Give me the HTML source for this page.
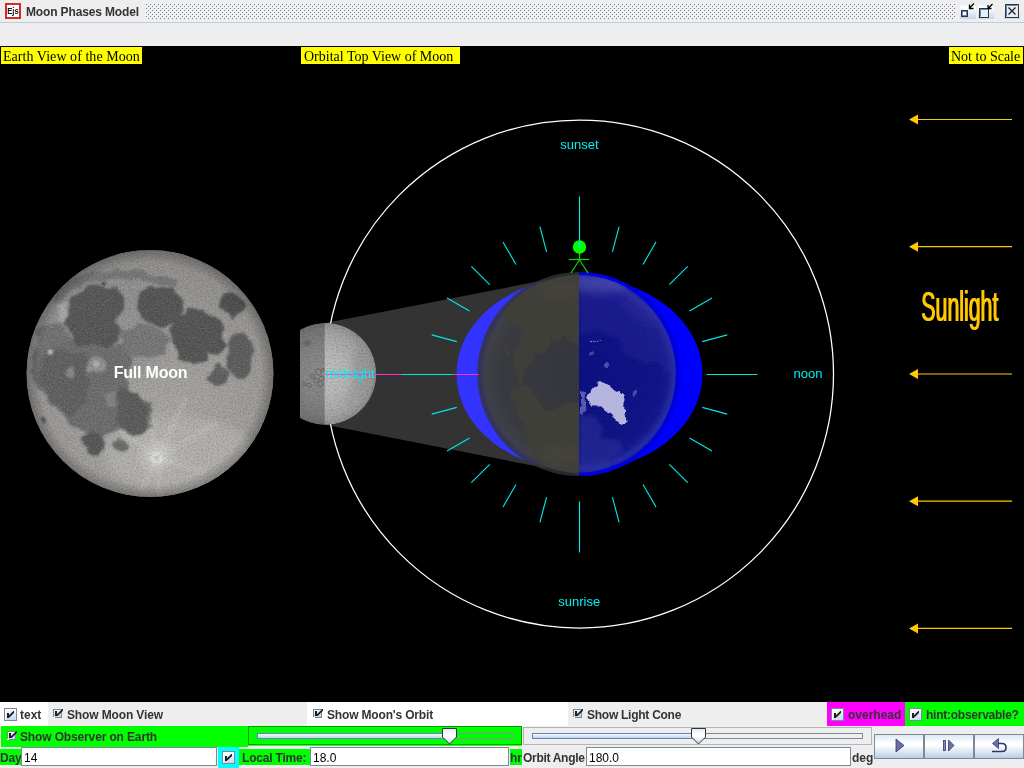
<!DOCTYPE html>
<html><head><meta charset="utf-8"><title>Moon Phases Model</title>
<style>
html,body{margin:0;padding:0;}
body{width:1024px;height:768px;overflow:hidden;background:#eeeeee;position:relative;font-family:"Liberation Sans",sans-serif;font-size:12px;color:#333333;}
.abs{position:absolute;}
.lbl,.tf,.ylab,#title{will-change:transform;}
#titlebar{left:0;top:0;width:1024px;height:22px;background:#eeeeee;border-bottom:1px solid #b8cfe5;}
#title{left:26px;top:5px;font-weight:bold;font-size:12px;line-height:14px;color:#333;white-space:nowrap;letter-spacing:-0.14px;}
#canvas{left:0;top:46px;width:1024px;height:656px;background:#000;}
.ylab{background:#ffff00;color:#000;font-family:"Liberation Serif",serif;font-size:14px;line-height:19px;height:17px;top:47px;white-space:nowrap;overflow:hidden;}
.lbl{font-weight:bold;font-size:12px;line-height:14px;white-space:nowrap;color:#333;}
.tf{background:#fff;border:1px solid #7a8a99;box-sizing:border-box;font-size:12px;line-height:17px;color:#000;padding-left:2px;padding-top:2px;overflow:hidden;}
.cb{width:13px;height:13px;box-sizing:border-box;border:1px solid #7a8a99;background:linear-gradient(170deg,#ffffff 0%,#f4f8fc 25%,#c4d8ee 100%);box-shadow:inset 1px 1px 0 #ffffff;}
.btn{top:734px;width:50px;height:25px;box-sizing:border-box;border:1px solid #7a8a99;background:linear-gradient(#dde8f3 0%,#ffffff 35%,#ffffff 45%,#b8cfe5 100%);}
</style></head><body>
<div id="titlebar" class="abs"></div>
<div id="title" class="abs">Moon Phases Model</div>
<div id="canvas" class="abs"></div>
<div class="abs ylab" style="left:1px;width:141px;"><span style="margin-left:2px;letter-spacing:0.05px">Earth View of the Moon</span></div>
<div class="abs ylab" style="left:301px;width:159px;"><span style="margin-left:3px">Orbital Top View of Moon</span></div>
<div class="abs ylab" style="left:949px;width:74px;"><span style="margin-left:2px">Not to Scale</span></div>

<!-- bottom row 1 -->
<div class="abs" style="left:0;top:702px;width:48px;height:24px;background:#fff"></div>
<div class="abs" style="left:307px;top:702px;width:261px;height:24px;background:#fff"></div>
<div class="abs" style="left:827px;top:702px;width:78px;height:24px;background:#ff00ff"></div>
<div class="abs" style="left:905px;top:702px;width:119px;height:24px;background:#00ff00"></div>
<div class="abs cb" style="left:4px;top:708px"></div>
<div class="abs lbl" style="left:20px;top:708px">text</div>
<div class="abs lbl" style="left:67px;top:708px;letter-spacing:-0.13px">Show Moon View</div>
<div class="abs lbl" style="left:327px;top:708px;letter-spacing:-0.17px">Show Moon's Orbit</div>
<div class="abs lbl" style="left:587px;top:708px;letter-spacing:-0.26px">Show Light Cone</div>
<div class="abs cb" style="left:831px;top:708px"></div>
<div class="abs lbl" style="left:848px;top:708px">overhead</div>
<div class="abs cb" style="left:909px;top:708px"></div>
<div class="abs lbl" style="left:926px;top:708px;letter-spacing:-0.25px">hint:observable?</div>

<!-- bottom row 2 -->
<div class="abs" style="left:1px;top:726px;width:247px;height:21px;background:#00ff00"></div>
<div class="abs" style="left:248px;top:726px;width:274px;height:19px;background:#00ff00;box-sizing:border-box;border:1px solid #00a000;"></div>
<div id="gstrip" class="abs" style="left:248px;top:745px;width:274px;height:1px;background:#30ff30"></div>
<div class="abs lbl" style="left:20px;top:730px;letter-spacing:-0.14px">Show Observer on Earth</div>
<div class="abs" style="left:523px;top:727px;width:349px;height:18px;background:#eeeeee;box-sizing:border-box;border:1px solid #b4b4b4;"></div>

<!-- bottom row 3 -->
<div class="abs" style="left:0px;top:749px;width:21px;height:16px;background:#00ff00"></div>
<div class="abs lbl" style="left:0px;top:751px;letter-spacing:-0.2px">Day</div>
<div class="abs tf" style="left:21px;top:747px;width:196px;height:19px;">14</div>
<div class="abs" style="left:218px;top:747px;width:21px;height:21px;background:#00ffff"></div>
<div class="abs cb" style="left:222px;top:751px"></div>
<div class="abs" style="left:239px;top:749px;width:71px;height:16px;background:#00ff00"></div>
<div class="abs lbl" style="left:242px;top:751px;letter-spacing:-0.2px">Local Time:</div>
<div class="abs tf" style="left:310px;top:747px;width:199px;height:19px;">18.0</div>
<div class="abs" style="left:510px;top:749px;width:12px;height:16px;background:#00ff00"></div>
<div class="abs lbl" style="left:510px;top:751px;">hr</div>
<div class="abs lbl" style="left:523px;top:751px;letter-spacing:-0.3px">Orbit Angle</div>
<div class="abs tf" style="left:586px;top:747px;width:265px;height:19px;">180.0</div>
<div class="abs lbl" style="left:852px;top:751px;">deg</div>
<div class="abs btn" style="left:874px"></div>
<div class="abs btn" style="left:924px"></div>
<div class="abs btn" style="left:974px"></div>

<svg class="abs" id="ui" style="left:0;top:0;will-change:transform" width="1024" height="768" viewBox="0 0 1024 768">
<!--UI-->
<defs>
<pattern id="bumps" x="145" y="3" width="4" height="4" patternUnits="userSpaceOnUse">
<rect x="0" y="0" width="1" height="1" fill="#ffffff"/><rect x="1" y="1" width="1" height="1" fill="#6b7f95"/>
<rect x="2" y="2" width="1" height="1" fill="#ffffff"/><rect x="3" y="3" width="1" height="1" fill="#6b7f95"/>
</pattern>
<linearGradient id="gbtn" x1="0" y1="0" x2="0" y2="1"><stop offset="0" stop-color="#e4edf6"/><stop offset="0.3" stop-color="#ffffff"/><stop offset="1" stop-color="#c3d6ea"/></linearGradient>
<linearGradient id="gthumb" x1="0" y1="0" x2="0" y2="1"><stop offset="0" stop-color="#dbe6f2"/><stop offset="0.35" stop-color="#ffffff"/><stop offset="0.55" stop-color="#ffffff"/><stop offset="1" stop-color="#bcd0e6"/></linearGradient>
<linearGradient id="gtrack" x1="0" y1="0" x2="0" y2="1"><stop offset="0" stop-color="#ffffff"/><stop offset="1" stop-color="#b8cfe5"/></linearGradient>
<linearGradient id="gcb" x1="0" y1="0" x2="0.3" y2="1"><stop offset="0" stop-color="#f4f8fc"/><stop offset="1" stop-color="#c4d6ea"/></linearGradient>
<g id="chk"><rect x="3" y="5" width="2" height="5" fill="#1e1e1e"/><path d="M5 7.3 L9.3 3 H10 V5 L5.7 9.3 H5 Z" fill="#1e1e1e"/></g>
<g id="scb"><rect x="0" y="0" width="9" height="9" fill="#7a8a99"/><rect x="1" y="1" width="7" height="7" fill="url(#gcb)"/><rect x="0" y="8" width="2" height="1" fill="#ffffff"/><rect x="2" y="2" width="2" height="5" fill="#1e1e1e"/><path d="M4 5.3 L9.3 0 H10 V1.7 L4.7 7 H4 Z" fill="#1e1e1e"/></g>
</defs>
<!-- title bar bumps -->
<rect x="145" y="3" width="811" height="16" fill="url(#bumps)"/>
<!-- Ejs icon -->
<rect x="5" y="3" width="16" height="16" fill="#d32a2a"/>
<rect x="7" y="5" width="12" height="12" fill="#ffffff"/>
<text x="7.2" y="14" font-family="Liberation Sans, sans-serif" font-weight="bold" font-size="8.5" fill="#111" textLength="11.6" lengthAdjust="spacingAndGlyphs">Ejs</text>
<!-- window buttons -->
<rect x="960" y="3" width="16" height="16" fill="url(#gbtn)"/>
<rect x="961.5" y="10.5" width="6" height="6" fill="#ffffff" stroke="#333333"/>
<rect x="962.5" y="11.5" width="4" height="4" fill="none" stroke="#6382bf"/>
<path d="M974 3.5 L969.5 8 M969.5 4.5 V8.5 H973.5" fill="none" stroke="#000" stroke-width="1.3"/>
<rect x="978" y="3" width="16" height="16" fill="url(#gbtn)"/>
<rect x="979.5" y="8.5" width="9" height="9" fill="#e6eef7" stroke="#333333"/>
<path d="M980.5 16.5 V9.5 H987.5" fill="none" stroke="#6382bf"/>
<path d="M992.5 4 L988 8.5 M988 5 V8.5 H991.5" fill="none" stroke="#000" stroke-width="1.3"/>
<rect x="1004" y="3" width="16" height="16" fill="url(#gbtn)"/>
<rect x="1005.5" y="4.5" width="13" height="13" fill="#e6eef7" stroke="#333333"/>
<path d="M1006.5 16.5 V5.5 H1017.5" fill="none" stroke="#6382bf"/>
<path d="M1008.5 7.5 L1015.5 14.5 M1015.5 7.5 L1008.5 14.5" fill="none" stroke="#222" stroke-width="1.3"/>
<!-- check marks -->
<use href="#chk" x="4" y="708"/><use href="#chk" x="831" y="708"/><use href="#chk" x="909" y="708"/><use href="#chk" x="222" y="751"/>
<use href="#scb" x="53" y="709"/><use href="#scb" x="313" y="709"/><use href="#scb" x="573" y="709"/><use href="#scb" x="7" y="731"/>
<!-- slider 1 (green) -->
<rect x="257.5" y="733.5" width="255" height="5" fill="none" stroke="#8f8aa8"/>
<rect x="257.5" y="733.5" width="192" height="5" fill="url(#gtrack)" stroke="#6382bf"/>
<path d="M442.5 728.5 H456.5 V737 L449.5 744 L442.5 737 Z" fill="url(#gthumb)" stroke="#333333"/>
<!-- slider 2 -->
<rect x="532.5" y="733.5" width="330" height="5" fill="#eeeeee" stroke="#7a8a99"/>
<rect x="532.5" y="733.5" width="166" height="5" fill="url(#gtrack)" stroke="#6382bf"/>
<path d="M691.5 728.5 H705.5 V737 L698.5 744 L691.5 737 Z" fill="url(#gthumb)" stroke="#333333"/>
<!-- button icons -->
<path d="M896 739 L904 745.5 L896 752 Z" fill="#6e6ea8" stroke="#33336a" stroke-width="0.8"/>
<rect x="943.5" y="740.5" width="2" height="10" fill="#8a8ac0" stroke="#33336a" stroke-width="0.8"/>
<path d="M948.5 740 L954 745.5 L948.5 751 Z" fill="#6e6ea8" stroke="#33336a" stroke-width="0.8"/>
<path d="M992 751.5 H1002 Q1006 751.5 1006 747.5 Q1006 743.5 1002 743.5 H998" fill="none" stroke="#33336a" stroke-width="1.6"/>
<path d="M992.5 743.5 L998.5 738.5 V748.5 Z" fill="#6e6ea8" stroke="#33336a" stroke-width="0.8"/>
<!--/UI-->
</svg>
<svg class="abs" id="scene" style="left:0;top:0;will-change:transform" width="1024" height="768" viewBox="0 0 1024 768">
<!--SCENE-->
<defs>
<clipPath id="cpMoon"><circle cx="150" cy="373.5" r="123.5"/></clipPath>
<clipPath id="cpEarthL"><path d="M579 275 A97 98.8 0 0 0 579 472.6 Z"/></clipPath>
<clipPath id="cpEarthR"><path d="M579 275 A97 98.8 0 0 1 579 472.6 Z"/></clipPath>
<clipPath id="cpTopMoon"><path d="M300 320 H380 V430 H300 Z"/></clipPath>
<clipPath id="cpTM"><circle cx="325.4" cy="373.9" r="50.8"/></clipPath>
<filter id="fat" x="-5%" y="-20%" width="110%" height="140%"><feOffset dx="1" dy="0" result="o"/><feMerge><feMergeNode in="SourceGraphic"/><feMergeNode in="o"/></feMerge></filter>
<filter id="rough" x="-10%" y="-10%" width="120%" height="120%"><feTurbulence type="fractalNoise" baseFrequency="0.06" numOctaves="3" seed="3" result="t"/><feDisplacementMap in="SourceGraphic" in2="t" scale="12" xChannelSelector="R" yChannelSelector="G" result="d"/><feGaussianBlur in="d" stdDeviation="1.3"/></filter>
<filter id="rough2" x="-10%" y="-10%" width="120%" height="120%"><feTurbulence type="fractalNoise" baseFrequency="0.12" numOctaves="3" seed="5" result="t"/><feDisplacementMap in="SourceGraphic" in2="t" scale="7" xChannelSelector="R" yChannelSelector="G" result="d"/><feGaussianBlur in="d" stdDeviation="0.7"/></filter>
<filter id="blur3" x="-30%" y="-30%" width="160%" height="160%"><feGaussianBlur stdDeviation="3"/></filter>
<filter id="blur2" x="-30%" y="-30%" width="160%" height="160%"><feGaussianBlur stdDeviation="2"/></filter>
<filter id="blur1" x="-30%" y="-30%" width="160%" height="160%"><feGaussianBlur stdDeviation="1"/></filter>
<filter id="blur5" x="-30%" y="-30%" width="160%" height="160%"><feGaussianBlur stdDeviation="5"/></filter>
<filter id="noiseM" x="0" y="0" width="100%" height="100%"><feTurbulence type="fractalNoise" baseFrequency="0.7" numOctaves="2" seed="7" result="n"/><feColorMatrix type="matrix" values="0 0 0 0 1  0 0 0 0 1  0 0 0 0 1  1.6 0 0 0 -0.62"/></filter>
<filter id="noiseD" x="0" y="0" width="100%" height="100%"><feTurbulence type="fractalNoise" baseFrequency="0.6" numOctaves="2" seed="11" result="n"/><feColorMatrix type="matrix" values="0 0 0 0 0  0 0 0 0 0  0 0 0 0 0  1.6 0 0 0 -0.62"/></filter>
<radialGradient id="gMoon" cx="165" cy="430" r="190" gradientUnits="userSpaceOnUse"><stop offset="0" stop-color="#a9a7a3"/><stop offset="0.5" stop-color="#9e9c99"/><stop offset="1" stop-color="#8c8a88"/></radialGradient>
<radialGradient id="gMoonEdge" cx="150" cy="373.5" r="123.5" gradientUnits="userSpaceOnUse"><stop offset="0.9" stop-color="#000" stop-opacity="0"/><stop offset="1" stop-color="#000" stop-opacity="0.25"/></radialGradient>
<radialGradient id="gEarthL" cx="579" cy="373.8" r="98" gradientUnits="userSpaceOnUse"><stop offset="0" stop-color="#36373c"/><stop offset="0.8" stop-color="#3a3b41"/><stop offset="0.95" stop-color="#404148"/><stop offset="1" stop-color="#3c3c52"/></radialGradient>
<radialGradient id="gEarthR" cx="579" cy="373.8" r="98" gradientUnits="userSpaceOnUse"><stop offset="0" stop-color="#0a0e80"/><stop offset="0.8" stop-color="#0e1284"/><stop offset="0.9" stop-color="#12168a"/><stop offset="0.97" stop-color="#242aa2"/><stop offset="1" stop-color="#1a1ea0"/></radialGradient>
<radialGradient id="gTM" cx="322" cy="374.4" r="55" gradientUnits="userSpaceOnUse"><stop offset="0" stop-color="#c2c2c2"/><stop offset="0.45" stop-color="#b6b6b6"/><stop offset="0.8" stop-color="#a2a2a2"/><stop offset="0.95" stop-color="#8c8c8c"/><stop offset="1" stop-color="#7a7a7a"/></radialGradient>
</defs>
<!-- orbit -->
<circle cx="579.5" cy="374" r="254" fill="none" stroke="#ffffff" stroke-width="1.25"/>
<!-- blue tidal ellipse -->
<ellipse cx="579.5" cy="374" rx="123" ry="96.5" fill="#0000ff"/>
<!-- light cone -->
<path d="M325.4 323.1 L579.5 273.3 V474.7 L325.4 424.7 Z" fill="#ffffff" fill-opacity="0.2"/>
<!-- Earth -->
<path d="M579.3 271.9 A102.1 102.1 0 0 0 579.3 476.1 Z" fill="#333333" fill-opacity="0.8"/>
<path d="M579.3 271.9 A102.1 102.1 0 0 1 579.3 476.1 Z" fill="#0000de"/>
<g clip-path="url(#cpEarthL)"><rect x="470" y="270" width="110" height="210" fill="url(#gEarthL)"/>
<!--EARTHL-->
<g filter="url(#rough2)">
<path d="M532.9 284.9 L580 272.7 L580 345.8 L570.8 340.4 L562.7 337.7 L557.2 340.4 L549.1 343.1 L546.4 351.2 L535.6 354 L530.2 364.8 L522 374 L515.3 374 L513.9 356.7 L518 343.1 L522 329.6 L516.6 324.2 L505.8 321.5 L504.4 309.3 L516.6 297.1 Z" fill="#40413a"/>
<path d="M516.6 374 L524.7 374 L522 386.2 L532.9 391.6 L539.6 405.1 L551.8 411.9 L560 406.5 L568.1 403.8 L580 401.1 L580 474.2 L557.2 468.8 L541 462 L530.2 452.5 L527.5 439 L522 422.7 L515.3 406.5 L509.9 395.7 L512.6 388.9 L520.7 386.2 Z" fill="#40413a"/>
<path d="M504 340 L508 346 L511 356 L509 358 L505 350 Z" fill="#40413a"/>
</g>
<g filter="url(#blur3)">
<ellipse cx="560" cy="290" rx="22" ry="10" fill="#4a463c" opacity="0.6"/>
<ellipse cx="560" cy="455" rx="20" ry="10" fill="#46463c" opacity="0.7"/>
</g>
<rect x="478" y="272" width="102" height="204" filter="url(#noiseD)" opacity="0.06"/>
<!--/EARTHL-->
</g>
<g clip-path="url(#cpEarthR)"><rect x="579" y="270" width="110" height="210" fill="url(#gEarthR)"/>
<!--EARTHR-->
<!--HAZE--><g filter="url(#blur5)"><ellipse cx="600" cy="284" rx="30" ry="9" fill="#5858b4" opacity="0.7"/><ellipse cx="640" cy="310" rx="22" ry="10" transform="rotate(40 640 310)" fill="#4040a8" opacity="0.22"/></g>
<g filter="url(#blur2)">
<path d="M579.4 274 L605 276.8 L634.9 293 L653.8 310.6 L670 332.3 L678.2 351.2 L678.2 374 L664.7 374 L659.2 362 L645.7 364.8 L634.9 358 L621.3 351.2 L618.6 337.7 L605 335 L598.3 329.6 L586.1 333.6 L579.4 335 Z" fill="#2c3098" opacity="0.32"/>
<path d="M579 415 L595 416 L603 428 L600 438 L620 440 L624 452 L610 458 L608 470 L579 475 Z" fill="#2a3098" opacity="0.5"/>
</g>
<g filter="url(#rough2)">
<path d="M599.7 380.8 L607.8 386.2 L618.6 393 L624.7 399.7 L624 411.9 L626.7 421.4 L621.3 424.8 L614.6 418.7 L607.8 411.9 L601 406.5 L591.5 406.5 L588.2 399.7 L591.5 388.9 Z" fill="#b4b4de"/>
<path d="M581 392 L586 393 L585 412 L581 414 Z" fill="#6c6cb8" opacity="0.8"/>
<ellipse cx="635" cy="393" rx="2" ry="4" fill="#5a5ab0" opacity="0.8"/>
<path d="M591 341.5 L601 340" stroke="#9090c8" stroke-width="1.2" fill="none"/>
<ellipse cx="606" cy="365" rx="3" ry="3" fill="#6a6ab8" opacity="0.7"/>
<ellipse cx="592" cy="354" rx="3" ry="2" fill="#6a6ab8" opacity="0.6"/>
</g>
<rect x="579" y="272" width="102" height="204" filter="url(#noiseM)" opacity="0.05"/>
<!--/EARTHR-->
</g>
<!-- top view moon -->
<g clip-path="url(#cpTopMoon)"><g clip-path="url(#cpTM)">
<circle cx="325.4" cy="373.9" r="51" fill="url(#gTM)"/>
<!--TOPMOON-->
<g filter="url(#blur3)">
<ellipse cx="362" cy="372" rx="9" ry="30" fill="#969696" opacity="0.7"/>
<ellipse cx="352" cy="400" rx="6" ry="10" fill="#9c9c9c" opacity="0.6"/>
</g>
<g filter="url(#blur1)">
<ellipse cx="307" cy="343" rx="4" ry="3" fill="#8e8e8e"/>
</g>
<g fill="none" stroke="#7c7c7c" stroke-width="0.9" opacity="0.8">
<circle cx="318" cy="372" r="3"/><circle cx="322" cy="378.5" r="2.6"/><circle cx="316" cy="380.5" r="2.4"/><circle cx="320.5" cy="384" r="2.6"/><circle cx="312" cy="376" r="2"/><circle cx="309" cy="385" r="2"/><circle cx="304" cy="384" r="1.8"/><circle cx="323" cy="370" r="1.6"/>
</g>
<rect x="300" y="322" width="80" height="104" filter="url(#noiseD)" opacity="0.22"/>
<rect x="300" y="322" width="80" height="104" filter="url(#noiseM)" opacity="0.16"/>
<!--/TOPMOON-->
<rect x="270" y="320" width="54.7" height="110" fill="#000" fill-opacity="0.27"/>
</g></g>
<!-- observer -->
<g stroke="#00e000" stroke-width="1.2" fill="none">
<line x1="579.5" y1="250" x2="579.5" y2="260"/><line x1="568.8" y1="259.5" x2="589.2" y2="259.5"/><line x1="579.5" y1="259.8" x2="571" y2="273"/><line x1="579.5" y1="259.8" x2="588" y2="273"/>
</g>
<circle cx="579.5" cy="247" r="6.7" fill="#00ff00"/>
<!-- magenta line -->
<line x1="325.4" y1="374.5" x2="478.5" y2="374.5" stroke="#ff30d0" stroke-width="1"/>
<!-- ticks -->
<g stroke="#00e6e6" stroke-width="1.15" fill="none" id="ticks">
<line x1="706.5" y1="374.5" x2="757.5" y2="374.5"/>
<line x1="702.2" y1="341.6" x2="727.3" y2="334.9"/>
<line x1="689.5" y1="311.0" x2="712.0" y2="298.0"/>
<line x1="669.3" y1="284.7" x2="687.7" y2="266.3"/>
<line x1="643.0" y1="264.5" x2="656.0" y2="242.0"/>
<line x1="612.4" y1="251.8" x2="619.1" y2="226.7"/>
<line x1="579.5" y1="247.5" x2="579.5" y2="196.5"/>
<line x1="546.6" y1="251.8" x2="539.9" y2="226.7"/>
<line x1="516.0" y1="264.5" x2="503.0" y2="242.0"/>
<line x1="489.7" y1="284.7" x2="471.3" y2="266.3"/>
<line x1="469.5" y1="311.0" x2="447.0" y2="298.0"/>
<line x1="456.8" y1="341.6" x2="431.7" y2="334.9"/>
<line x1="452.5" y1="374.5" x2="401.5" y2="374.5"/>
<line x1="456.8" y1="407.4" x2="431.7" y2="414.1"/>
<line x1="469.5" y1="438.0" x2="447.0" y2="451.0"/>
<line x1="489.7" y1="464.3" x2="471.3" y2="482.7"/>
<line x1="516.0" y1="484.5" x2="503.0" y2="507.0"/>
<line x1="546.6" y1="497.2" x2="539.9" y2="522.3"/>
<line x1="579.5" y1="501.5" x2="579.5" y2="552.5"/>
<line x1="612.4" y1="497.2" x2="619.1" y2="522.3"/>
<line x1="643.0" y1="484.5" x2="656.0" y2="507.0"/>
<line x1="669.3" y1="464.3" x2="687.7" y2="482.7"/>
<line x1="689.5" y1="438.0" x2="712.0" y2="451.0"/>
<line x1="702.2" y1="407.4" x2="727.3" y2="414.1"/>
</g>
<!-- labels -->
<g font-family="Liberation Sans, sans-serif" font-size="13" fill="#00f0f0" text-anchor="middle">
<text x="579.5" y="149">sunset</text>
<text x="808" y="378">noon</text>
<text x="579.2" y="606">sunrise</text>
<text x="350" y="378">midnight</text>
</g>
<!-- sunlight arrows -->
<g stroke="#ffc800" stroke-width="1.2" fill="#ffc800">
<g id="arrow"><line x1="917" y1="119.5" x2="1012" y2="119.5"/><path d="M909 119.5 L918 114.5 V124.5 Z" stroke="none"/></g>
<use href="#arrow" y="127.2"/><use href="#arrow" y="254.5"/><use href="#arrow" y="381.7"/><use href="#arrow" y="508.9"/>
</g>
<g filter="url(#fat)"><text x="0" y="0" transform="translate(920.8,321.4) scale(0.508,1.03)" font-family="Liberation Sans, sans-serif" font-size="42" fill="#ffc800">Sunlight</text></g>
<!-- big moon -->
<g clip-path="url(#cpMoon)">
<circle cx="150" cy="373.5" r="124" fill="url(#gMoon)"/>
<!--BIGMOON-->
<g filter="url(#blur5)">
<ellipse cx="180" cy="455" rx="75" ry="38" fill="#b8b6b2" opacity="0.7"/>
<ellipse cx="157" cy="456" rx="15" ry="14" fill="#d0cecb" opacity="0.8"/>
<ellipse cx="110" cy="330" rx="60" ry="50" fill="#8a8a8a" opacity="0.4"/>
</g>
<g filter="url(#rough)">
<!-- frigoris -->
<path d="M55.5 300 Q62 290 70.8 285 Q92 275 121 274 Q150 274 178 284" fill="none" stroke="#727272" stroke-width="9" opacity="0.9"/>
<!-- big procellarum/insularum/cognitum zone -->
<path d="M40.3 345.6 L57.2 335.4 L74.2 342.2 L87.7 346 L121.6 346 L131.7 359.1 L124.9 379.4 L131.7 393 L148.6 403.1 L150.3 426.8 L131.7 435.3 L114.8 426.8 L104.6 437 L87.7 433.6 L70.8 420 L50.5 403.1 L35.2 379.4 L33.5 359.1 Z" fill="#6c6c6c" stroke="#6c6c6c" stroke-width="3" stroke-linejoin="round"/>
<!-- procellarum upper-left -->
<path d="M38 330 Q48 322 62 326 L72 340 L50 348 L34 352 Z" fill="#727272"/>
<!-- procellarum core -->
<path d="M42 360 L60 352 L84 358 L88 380 L84 404 L70 416 L52 400 L40 380 Z" fill="#5e5e5e" stroke="#5e5e5e" stroke-width="3" stroke-linejoin="round"/>
<!-- imbrium -->
<path d="M70.8 301.5 L75.9 294.8 L91.1 287.2 L114.8 286.3 L121.6 294.8 L119.9 308.3 L114.8 318.5 L121.6 328.6 L118.2 338.8 L104.6 343.9 L91.1 345.6 L75.9 338.8 L65.7 325.2 L69.1 311.7 Z" fill="#545454" stroke="#545454" stroke-width="3" stroke-linejoin="round"/>
<!-- serenitatis -->
<ellipse cx="161" cy="306" rx="22.5" ry="20" fill="#525252"/>
<!-- tranquillitatis -->
<path d="M175.4 323.6 L188.9 311.7 L205.9 311.7 L217.7 321.9 L222.8 328.6 L221.1 338.8 L224.5 345.6 L217.7 352.3 L207.5 345.6 L204.2 359.1 L194 362.5 L180.5 354 L173.7 338.8 L172 328.6 Z" fill="#525252" stroke="#525252" stroke-width="4" stroke-linejoin="round"/>
<!-- crisium -->
<ellipse cx="231.2" cy="305.8" rx="13" ry="10" transform="rotate(35 231.2 305.8)" fill="#4e4e4e"/>
<!-- fecunditatis -->
<ellipse cx="240" cy="355" rx="12.5" ry="24" fill="#5c5c5c"/>
<!-- nectaris -->
<ellipse cx="220" cy="376" rx="10.5" ry="11" fill="#5e5e5e"/>
<!-- vaporum/medii -->
<path d="M121.6 330 L138.5 323.6 L160 328.6 L171 342.2 L162.2 355.7 L138.5 359.1 L121.6 352.3 Z" fill="#727272" opacity="0.9"/>
<!-- nubium core -->
<path d="M121.6 390 L138.5 392 L146 407.9 L144.5 428 L135.1 436 L123 432 L116 421.4 L121.6 407.9 L118.2 396 Z" fill="#5a5a5a" stroke="#5a5a5a" stroke-width="3" stroke-linejoin="round"/>
<ellipse cx="121" cy="446" rx="7" ry="6" fill="#6a6a6a"/>
<!-- humorum -->
<ellipse cx="93.6" cy="442.5" rx="11" ry="11" fill="#565656"/>
<!-- bright highland patch W of imbrium -->
<ellipse cx="62" cy="313" rx="6" ry="11" fill="#a6a6a6"/>
<!-- copernicus / kepler ejecta -->
<ellipse cx="96.2" cy="364.2" rx="8" ry="7" fill="#969696" opacity="0.9"/>
<ellipse cx="70.8" cy="372" rx="4" ry="4" fill="#8e8e8e" opacity="0.8"/>
<ellipse cx="110" cy="400" rx="6" ry="8" fill="#8a8a8a" opacity="0.7"/>
</g>
<g filter="url(#blur1)">
<circle cx="96.2" cy="364.2" r="3" fill="#b4b4b4"/>
<circle cx="50.5" cy="352" r="2.5" fill="#c8c8c8"/>
<circle cx="157" cy="458" r="6" fill="#e6e6e6"/>
<circle cx="157" cy="458" r="1.8" fill="#909090"/>
<ellipse cx="103.8" cy="283.8" rx="2.5" ry="2" fill="#484848"/>
<ellipse cx="43.5" cy="420" rx="1.8" ry="3.5" transform="rotate(-20 43.5 420)" fill="#505050"/>
</g>
<g stroke="#d4d4d4" stroke-width="2.5" opacity="0.5" filter="url(#blur2)" fill="none">
<path d="M157 458 L118 428 M157 458 L186 398 M157 458 L205 472 M157 458 L150 418 M157 458 L140 492 M157 458 L218 422 M157 458 L160 495"/>
</g>
<rect x="26" y="249" width="250" height="250" filter="url(#noiseM)" opacity="0.2"/>
<rect x="26" y="249" width="250" height="250" filter="url(#noiseD)" opacity="0.22"/>
<!--/BIGMOON-->
<circle cx="150" cy="373.5" r="123.5" fill="url(#gMoonEdge)"/>
</g>
<text x="150.5" y="378" text-anchor="middle" font-family="Liberation Sans, sans-serif" font-weight="bold" font-size="16" fill="#ffffff" letter-spacing="-0.2">Full Moon</text>
<!--/SCENE-->
</svg>
</body></html>
